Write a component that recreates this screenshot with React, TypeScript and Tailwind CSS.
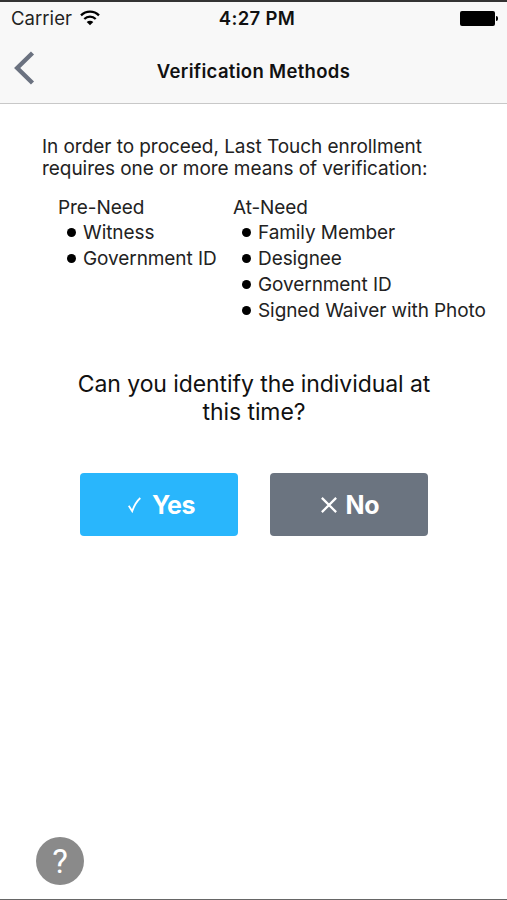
import React from 'react';

const methods = [
  {
    title: 'Pre-Need',
    width: 'w-[175px]',
    items: ['Witness', 'Government ID'],
  },
  {
    title: 'At-Need',
    width: 'w-[260px]',
    items: ['Family Member', 'Designee', 'Government ID', 'Signed Waiver with Photo'],
  },
];

const StatusBar = () => (
  <div className="grid h-[33px] grid-cols-3 items-center pl-[11px] pr-[9px] text-[18.5px] text-[#222]">
    <div className="flex items-center gap-[8px]">
      <span className="tracking-[0.05px]">Carrier</span>
      <svg className="-mt-[2px]" width="20" height="16" viewBox="0 0 20 16" fill="none" stroke="#000" strokeWidth="2.3">
        <path d="M1 5.4C6 .3 14 .3 19 5.4" />
        <path d="M4.3 9C7.5 5.9 12.5 5.9 15.7 9" />
        <path d="M10 15.2 6.7 11.9C8.6 10.2 11.4 10.2 13.3 11.9Z" fill="#000" stroke="none" />
      </svg>
    </div>
    <span className="pl-[5px] text-center font-semibold tracking-[0.35px] text-[#111]">4:27 PM</span>
    <div className="flex items-center justify-end gap-px">
      <span className="h-[15px] w-[35px] rounded-[2px] bg-black" />
      <span className="h-[5px] w-[2px] rounded-r-full bg-black" />
    </div>
  </div>
);

const Header = () => (
  <header className="h-[104px] border-t-2 border-b border-t-[#333] border-b-[#c8c8c8] bg-[#f8f8f8]">
    <StatusBar />
    <div className="grid h-[68px] grid-cols-[60px_1fr_60px] items-center">
      <button className="pb-[3px] pl-[14px]" aria-label="Back">
        <svg width="22" height="34" viewBox="0 0 22 34" fill="none" stroke="#6b7280" strokeWidth="4.4">
          <path d="M18.5 2 3.2 17 18.5 32" />
        </svg>
      </button>
      <h1 className="pt-[6px] text-center text-[18.5px] font-semibold tracking-[0.32px] text-[#111]">
        Verification Methods
      </h1>
    </div>
  </header>
);

const App = () => {
  return (
    <div className="flex h-[900px] w-[507px] flex-col overflow-hidden border-b border-[#666] bg-white font-['Inter',sans-serif]">
      <Header />

      <main className="flex flex-1 flex-col text-[#222]">
        <p className="mt-[32px] pl-[42px] text-[19px] leading-[22px] tracking-[-0.05px] whitespace-nowrap">
          In order to proceed, Last Touch enrollment
          <br />
          requires one or more means of verification:
        </p>

        <div className="mt-[15px] flex pl-[58px] text-[19px] leading-[26px] tracking-[-0.08px]">
          {methods.map((method) => (
            <section key={method.title} className={method.width}>
              <h2>{method.title}</h2>
              <ul className="-mt-px pl-[9px]">
                {method.items.map((item) => (
                  <li key={item} className="flex items-center gap-[7px] whitespace-nowrap">
                    <span className="-mt-px size-[9px] shrink-0 rounded-full bg-black" />
                    <span>{item}</span>
                  </li>
                ))}
              </ul>
            </section>
          ))}
        </div>

        <p className="mt-[46px] pl-px text-center text-[23px] leading-7 tracking-[-0.08px] text-[#111]">
          Can you identify the individual at
          <br />
          this time?
        </p>

        <div className="mt-[47px] flex justify-center gap-8 text-[25px] font-bold text-white">
          <button className="flex h-[63px] w-[158px] items-center justify-center gap-[11px] rounded-[4px] bg-[#29b6fc] pt-px pl-[6px]">
            <svg className="-mt-px" width="13" height="16" viewBox="0 0 13 16" fill="none" stroke="currentColor" strokeWidth="1.8">
              <path d="M.7 8.7 4.2 14.2C6 9 8.8 4.2 12.3 1" />
            </svg>
            <span className="pt-[2px] tracking-[-0.4px]">Yes</span>
          </button>
          <button className="flex h-[63px] w-[158px] items-center justify-center gap-[9px] rounded-[4px] bg-[#6b7480] pt-px pl-[3px]">
            <svg className="-mt-px" width="16" height="16" viewBox="0 0 15 15" fill="none" stroke="currentColor" strokeWidth="2.1">
              <path d="m.8.8 13.4 13.4M14.2.8.8 14.2" />
            </svg>
            <span className="pt-[2px] tracking-[-0.3px]">No</span>
          </button>
        </div>

        <button className="mt-auto mb-[14px] ml-9 flex size-12 items-center justify-center rounded-full bg-[#8a8a8a] pt-px font-['Roboto',sans-serif] text-[33px] text-white">
          ?
        </button>
      </main>
    </div>
  );
};

export default App;
